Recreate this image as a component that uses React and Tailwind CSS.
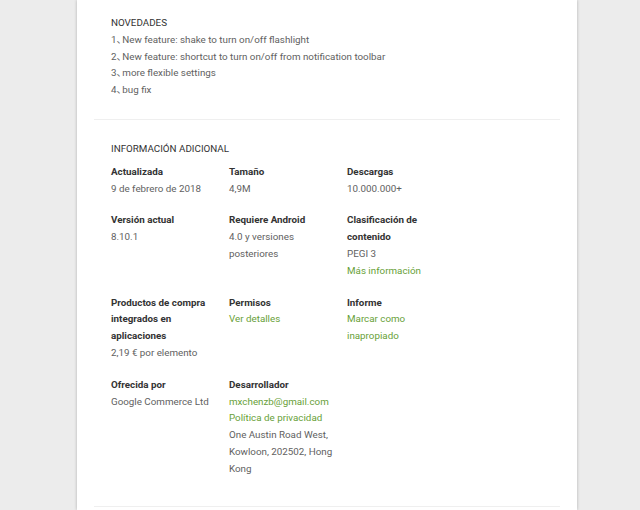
import React from 'react';

const notes = [
  ['1', 'New feature: shake to turn on/off flashlight'],
  ['2', 'New feature: shortcut to turn on/off from notification toolbar'],
  ['3', 'more flexible settings'],
  ['4', 'bug fix'],
];

const rows = [
  [
    { label: 'Actualizada', lines: [{ t: '9 de febrero de 2018' }] },
    { label: 'Tamaño', lines: [{ t: '4,9M' }] },
    { label: 'Descargas', lines: [{ t: '10.000.000+' }] },
  ],
  [
    { label: 'Versión actual', lines: [{ t: '8.10.1' }] },
    { label: 'Requiere Android', lines: [{ t: '4.0 y versiones posteriores' }] },
    {
      label: 'Clasificación de contenido',
      lines: [{ t: 'PEGI 3' }, { t: 'Más información', link: true }],
    },
  ],
  [
    {
      label: 'Productos de compra integrados en aplicaciones',
      lines: [{ t: '2,19 € por elemento' }],
    },
    { label: 'Permisos', lines: [{ t: 'Ver detalles', link: true }] },
    { label: 'Informe', lines: [{ t: 'Marcar como inapropiado', link: true }] },
  ],
  [
    { label: 'Ofrecida por', lines: [{ t: 'Google Commerce Ltd' }] },
    {
      label: 'Desarrollador',
      lines: [
        { t: 'mxchenzb@gmail.com', link: true },
        { t: 'Política de privacidad', link: true },
        { t: 'One Austin Road West, Kowloon, 202502, Hong Kong' },
      ],
    },
  ],
];

const InfoItem = ({ item }) => (
  <div className="w-[118px] pr-[8px]">
    <div className="font-bold text-[#333333]">{item.label}</div>
    {item.lines.map((line, i) => (
      <div key={i} className={line.link ? 'text-[#689f38]' : 'text-[#616161]'}>
        {line.t}
      </div>
    ))}
  </div>
);

export default function App() {
  return (
    <div
      className="min-h-[510px] bg-[#ececec] text-[9.8px] leading-[16.8px]"
      style={{ fontFamily: 'Roboto, "Liberation Sans", "Noto Sans CJK SC", sans-serif' }}
    >
      <div className="ml-[77px] w-[500px] bg-white shadow-[0_0_3px_rgba(0,0,0,0.25)] px-[17px] min-h-[510px]">
        {/* What's new */}
        <div className="px-[17px] pt-[15px] pb-[20px]">
          <div className="text-[#333333]">NOVEDADES</div>
          {notes.map(([n, t]) => (
            <div key={n} className="text-[#616161]">
              {n}
              <span className="tracking-[-4px]">、</span>
              {t}
            </div>
          ))}
        </div>

        <div className="h-px bg-[#efefef]" />

        {/* Additional info */}
        <div className="px-[17px] pt-[21px] pb-[28px]">
          <div className="text-[#333333] mb-[6px]">INFORMACIÓN ADICIONAL</div>
          <div className="flex flex-col gap-[15px]">
            {rows.map((row, r) => (
              <div key={r} className="flex">
                {row.map((item) => (
                  <InfoItem key={item.label} item={item} />
                ))}
              </div>
            ))}
          </div>
        </div>

        <div className="h-px bg-[#efefef]" />
      </div>
    </div>
  );
}
